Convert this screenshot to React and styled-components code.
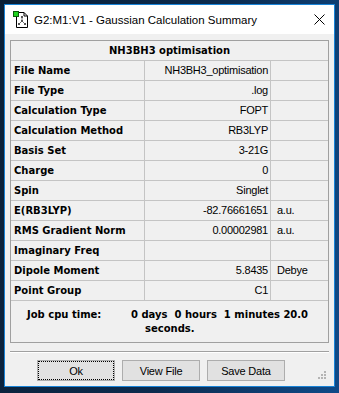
import React from 'react'
import styled, { createGlobalStyle } from 'styled-components'

const GlobalStyle = createGlobalStyle`
  html, body {
    margin: 0;
    padding: 0;
  }
  body {
    width: 339px;
    height: 393px;
    overflow: hidden;
    background: linear-gradient(100deg, #0a1f36 0%, #0c2b4e 55%, #0f4a88 100%);
    font-family: "Liberation Sans", Arial, sans-serif;
  }
`

const Page = styled.div`
  padding: 4px;
`

const Window = styled.div`
  position: relative;
  width: 331px;
  height: 383px;
  box-sizing: border-box;
  border: 1px solid #1883d7;
  background: #f0f0f0;
  display: flex;
  flex-direction: column;
`

const TitleBar = styled.div`
  height: 29px;
  flex-shrink: 0;
  background: #fff;
  display: flex;
  align-items: center;
  padding-left: 8px;
`

const Title = styled.span`
  margin-left: 5px;
  font-size: 11.5px;
  color: #000;
`

const Close = styled.div`
  margin-left: auto;
  margin-right: 9px;
  width: 11px;
  height: 11px;
  display: flex;
`

const Body = styled.div`
  padding: 6px 5px 0 5px;
`

const Frame = styled.div`
  border: 1px solid #a0a0a0;
`

const Heading = styled.div`
  height: 20px;
  box-sizing: border-box;
  border-bottom: 1px solid #c4c4c4;
  text-align: center;
  line-height: 19px;
  font-family: "DejaVu Sans", Verdana, sans-serif;
  font-weight: bold;
  font-size: 10px;
  color: #000;
`

const Row = styled.div`
  display: grid;
  grid-template-columns: 134px 126px 57px;
  height: 20px;
  box-sizing: border-box;
  border-bottom: 1px solid #c4c4c4;
`

const Label = styled.div`
  border-right: 1px solid #c4c4c4;
  padding-left: 3px;
  line-height: 19px;
  font-family: "DejaVu Sans", Verdana, sans-serif;
  font-weight: bold;
  font-size: 10px;
  color: #000;
  white-space: nowrap;
`

const Value = styled.div`
  border-right: 1px solid #c4c4c4;
  padding-right: 2px;
  text-align: right;
  line-height: 19px;
  font-size: 11px;
  letter-spacing: -0.25px;
  color: #000;
  white-space: nowrap;
`

const Unit = styled.div`
  padding-left: 6px;
  line-height: 19px;
  font-size: 11px;
  letter-spacing: -0.25px;
  color: #000;
`

const Cpu = styled.div`
  height: 41px;
  box-sizing: border-box;
  display: flex;
  padding: 7px 0 0 16px;
  font-family: "DejaVu Sans", Verdana, sans-serif;
  font-weight: bold;
  font-size: 10px;
  line-height: 14px;
  color: #000;
`

const CpuLabel = styled.div`
  width: 104px;
`

const CpuLine = styled.div`
  white-space: pre;
  padding-left: ${p => p.$indent || 0}px;
`

const Separator = styled.div`
  margin-top: 8px;
  border-top: 1px solid #a0a0a0;
  border-bottom: 1px solid #fff;
`

const ButtonBar = styled.div`
  margin-top: 7px;
  display: flex;
  gap: 7px;
  padding-left: 27px;
`

const Button = styled.button`
  width: 78px;
  height: 21px;
  box-sizing: border-box;
  margin: 0;
  padding: 0;
  border: 1px solid #adadad;
  background: #e1e1e1;
  font-family: "Liberation Sans", Arial, sans-serif;
  font-size: 11px;
  letter-spacing: -0.2px;
  color: #000;
  outline: ${p => (p.$focused ? '1px dotted #000' : 'none')};
  outline-offset: -2px;
`

const Grip = styled.svg`
  position: absolute;
  right: 8px;
  bottom: 7px;
`

const rows = [
  ['File Name', 'NH3BH3_optimisation', ''],
  ['File Type', '.log', ''],
  ['Calculation Type', 'FOPT', ''],
  ['Calculation Method', 'RB3LYP', ''],
  ['Basis Set', '3-21G', ''],
  ['Charge', '0', ''],
  ['Spin', 'Singlet', ''],
  ['E(RB3LYP)', '-82.76661651', 'a.u.'],
  ['RMS Gradient Norm', '0.00002981', 'a.u.'],
  ['Imaginary Freq', '', ''],
  ['Dipole Moment', '5.8435', 'Debye'],
  ['Point Group', 'C1', ''],
]

function AppIcon() {
  return (
    <svg width="16" height="17" viewBox="0 0 16 17">
      <path d="M3.5 1.5 H11 L14.5 5 V16.5 H3.5 Z" fill="#fff" stroke="#000" />
      <path d="M11 1.5 V5 H14.5" fill="none" stroke="#000" />
      <line x1="9" y1="6" x2="9" y2="10" stroke="#777" />
      <line x1="9" y1="10" x2="6" y2="13" stroke="#777" />
      <line x1="9" y1="10" x2="12" y2="13" stroke="#777" />
      <rect x="8" y="5" width="2" height="2" fill="#555" />
      <rect x="8" y="9" width="2" height="2" fill="#555" />
      <rect x="5" y="12" width="2" height="2" fill="#555" />
      <rect x="11" y="12" width="2" height="2" fill="#555" />
      <rect x="0.5" y="0.5" width="5" height="5" fill="#1ed21e" stroke="#0a5a0a" />
    </svg>
  )
}

export default function App() {
  return (
    <>
      <GlobalStyle />
      <Page>
        <Window>
          <TitleBar>
            <AppIcon />
            <Title>G2:M1:V1 - Gaussian Calculation Summary</Title>
            <Close>
              <svg width="11" height="11" viewBox="0 0 11 11">
                <path d="M0.5 0.5 L10.5 10.5 M10.5 0.5 L0.5 10.5" stroke="#000" strokeWidth="1" />
              </svg>
            </Close>
          </TitleBar>
          <Body>
            <Frame>
              <Heading>NH3BH3 optimisation</Heading>
              {rows.map(([label, value, unit]) => (
                <Row key={label}>
                  <Label>{label}</Label>
                  <Value>{value}</Value>
                  <Unit>{unit}</Unit>
                </Row>
              ))}
              <Cpu>
                <CpuLabel>Job cpu time:</CpuLabel>
                <div>
                  <CpuLine>0 days  0 hours  1 minutes 20.0</CpuLine>
                  <CpuLine $indent={14}>seconds.</CpuLine>
                </div>
              </Cpu>
            </Frame>
            <Separator />
            <ButtonBar>
              <Button $focused>Ok</Button>
              <Button>View File</Button>
              <Button>Save Data</Button>
            </ButtonBar>
          </Body>
          <Grip width="8" height="8" viewBox="0 0 8 8">
            <rect x="6" y="0" width="2" height="2" fill="#b4b4b4" />
            <rect x="3" y="3" width="2" height="2" fill="#b4b4b4" />
            <rect x="6" y="3" width="2" height="2" fill="#b4b4b4" />
            <rect x="0" y="6" width="2" height="2" fill="#b4b4b4" />
            <rect x="3" y="6" width="2" height="2" fill="#b4b4b4" />
            <rect x="6" y="6" width="2" height="2" fill="#b4b4b4" />
          </Grip>
        </Window>
      </Page>
    </>
  )
}
